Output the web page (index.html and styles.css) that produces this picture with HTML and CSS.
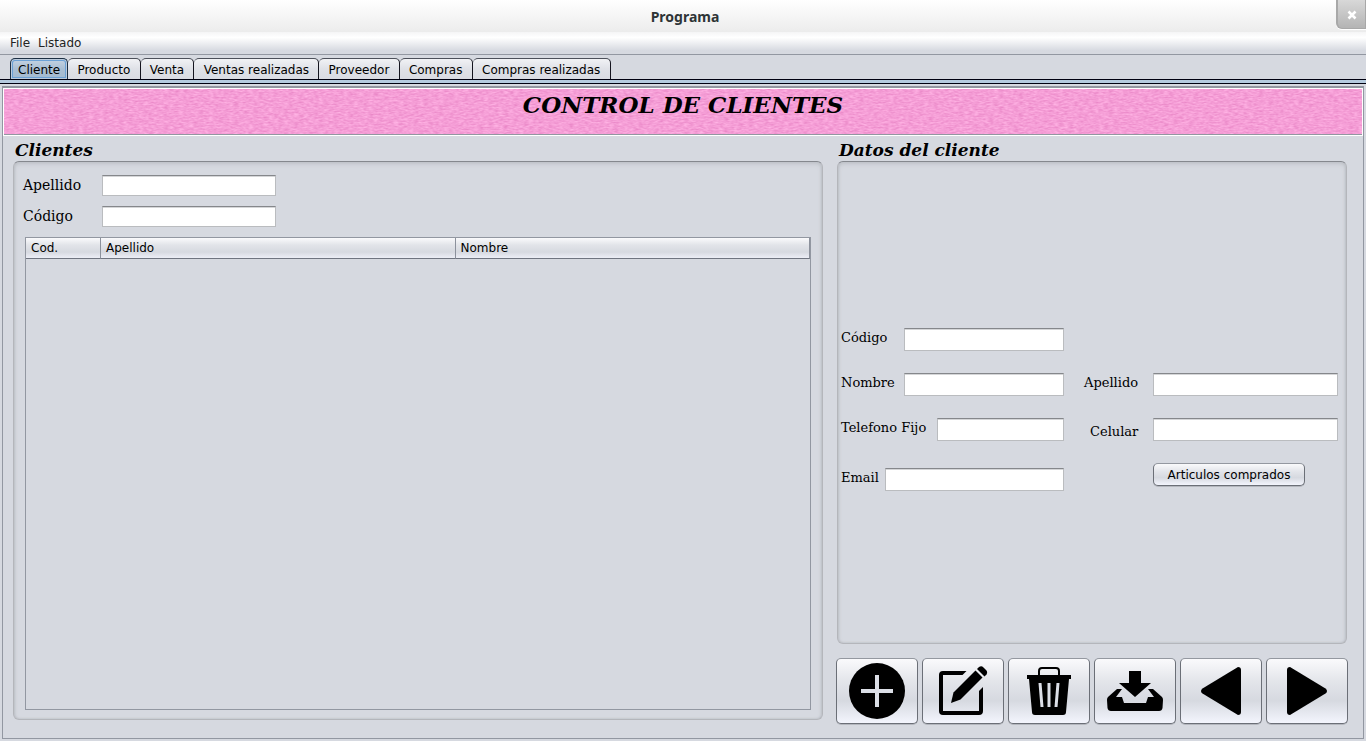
FILE: index.html
```html
<!DOCTYPE html>
<html lang="es">
<head>
<meta charset="utf-8">
<title>Programa</title>
<link rel="stylesheet" href="styles.css">
</head>
<body>
<div class="window">
  <header class="titlebar">
    <span class="titlebar-text">Programa</span>
    <button class="close" type="button" aria-label="Cerrar"><svg width="10" height="10" viewBox="0 0 10 10"><path d="M1.500 1.500l7 7M8.500 1.500l-7 7" stroke="#fff" stroke-width="2.600" fill="none"/></svg></button>
  </header>
  <nav class="menubar">
    <button class="menu" type="button">File</button>
    <button class="menu" type="button">Listado</button>
  </nav>
  <div class="tabs" role="tablist">
    <button class="tab tab-active" type="button" role="tab" aria-selected="true">Cliente</button>
    <button class="tab" type="button" role="tab">Producto</button>
    <button class="tab" type="button" role="tab">Venta</button>
    <button class="tab" type="button" role="tab">Ventas realizadas</button>
    <button class="tab" type="button" role="tab">Proveedor</button>
    <button class="tab" type="button" role="tab">Compras</button>
    <button class="tab" type="button" role="tab">Compras realizadas</button>
  </div>
  <div class="tab-strip"></div>
  <main class="page">
    <div class="banner">
      <svg class="banner-texture" width="100%" height="100%" aria-hidden="true">
        <filter id="weave" x="0" y="0" width="100%" height="100%" color-interpolation-filters="sRGB">
          <feTurbulence type="fractalNoise" baseFrequency="0.2 0.6" numOctaves="2" seed="4"/>
          <feColorMatrix values="0.12 0 0 0 0.9  0.24 0 0 0 0.5  0.16 0 0 0 0.76  0 0 0 0 1"/>
        </filter>
        <rect width="100%" height="100%" filter="url(#weave)"/>
      </svg>
      <h1 class="banner-title">CONTROL DE CLIENTES</h1>
    </div>
    <div class="content">
      <section class="list">
        <h2 class="heading">Clientes</h2>
        <div class="panel list-panel">
          <div class="search">
            <label class="search-label" for="s-apellido">Apellido</label>
            <input class="field" id="s-apellido" type="text">
            <label class="search-label" for="s-codigo">Código</label>
            <input class="field" id="s-codigo" type="text">
          </div>
          <div class="table-box">
            <table class="table">
              <thead><tr><th class="col-code">Cod.</th><th>Apellido</th><th>Nombre</th></tr></thead>
              <tbody></tbody>
            </table>
          </div>
        </div>
      </section>
      <section class="details">
        <h2 class="heading">Datos del cliente</h2>
        <form class="panel form">
          <div class="row row-left"><label class="label" for="codigo">Código</label><input class="field" id="codigo" type="text"></div>
          <div class="row row-left"><label class="label" for="nombre">Nombre</label><input class="field" id="nombre" type="text"></div>
          <div class="row"><label class="label label-right" for="apellido">Apellido</label><input class="field" id="apellido" type="text"></div>
          <div class="row row-left"><label class="label label-long" for="fijo">Telefono Fijo</label><input class="field" id="fijo" type="text"></div>
          <div class="row"><label class="label label-right label-low" for="celular">Celular</label><input class="field" id="celular" type="text"></div>
          <div class="row row-left row-email"><label class="label label-short" for="email">Email</label><input class="field" id="email" type="text"></div>
          <div class="row row-action"><button class="button" type="button">Articulos comprados</button></div>
        </form>
        <div class="actions">
          <button class="action" type="button" aria-label="Nuevo"><svg width="58" height="58" viewBox="0 0 58 58"><circle cx="29" cy="29" r="28"/><path d="M29 13v32M13 29h32" stroke="#dcdfe7" stroke-width="4"/></svg></button>
          <button class="action" type="button" aria-label="Editar"><svg width="58" height="58" viewBox="0 0 58 58"><path d="M32.500 9H9a4 4 0 0 0-4 4v36a4 4 0 0 0 4 4h36a4 4 0 0 0 4-4V25l-4 4v20H9V13h19.500z"/><path d="M17 41l2.500-10.500 22-22 7 7-22 22z"/><path d="M43 7l2-2q2.500-1.500 4.500.5l2.500 2.500q2 2 .5 4.500l-2 2z"/></svg></button>
          <button class="action" type="button" aria-label="Borrar"><svg width="58" height="58" viewBox="0 0 58 58"><path d="M19 14V9a3 3 0 0 1 3-3h14a3 3 0 0 1 3 3v5" fill="none" stroke="#000" stroke-width="2"/><path d="M7 13h44v4h-2l-3 33a3 3 0 0 1-3 3H15a3 3 0 0 1-3-3L9 17H7z"/><path d="M18.500 21h3l2 24h-3zM27.500 21h3v24h-3zM36.500 21h3l-2 24h-3z" fill="#dcdfe7"/></svg></button>
          <button class="action" type="button" aria-label="Guardar"><svg width="58" height="58" viewBox="0 0 58 58"><path d="M23 9h12v12h10L29 35 13 21h10z"/><path d="M11 27h5l-6 8h6l2 6h22l2-6h6l-6-8h5l9 8q1 1 1 3l-.5 8q-.5 3-3.500 3h-48q-3 0-3.500-3L1 38q0-2 1-3z"/></svg></button>
          <button class="action" type="button" aria-label="Anterior"><svg width="58" height="58" viewBox="0 0 58 58"><path d="M46 5q3 0 3 3v42q0 3-3 3L10.500 31.500Q9 30.500 9 29t1.500-2.500z"/></svg></button>
          <button class="action" type="button" aria-label="Siguiente"><svg width="58" height="58" viewBox="0 0 58 58"><path d="M12 5q-3 0-3 3v42q0 3 3 3l35.500-21.500Q49 30.500 49 29t-1.500-2.500z"/></svg></button>
        </div>
      </section>
    </div>
  </main>
</div>
</body>
</html>
```
FILE: styles.css
```css
* { box-sizing: border-box; }
body {
  margin: 0;
  background: #d6d9e0;
  color: #000;
  font-family: "DejaVu Sans", sans-serif;
  font-size: 12px;
}
button, input { font: inherit; color: inherit; margin: 0; }
h1, h2 { margin: 0; }

.window { min-height: 100vh; display: flex; flex-direction: column; }

.titlebar {
  position: relative;
  height: 32px;
  display: flex;
  align-items: center;
  justify-content: center;
  background: linear-gradient(#fff, #ececec);
}
.titlebar-text {
  font-family: "Noto Sans", "Open Sans", sans-serif;
  font-size: 14px;
  font-weight: 700;
  line-height: 18px;
  padding: 2px 0 0 4px;
  color: #2e3436;
}
.close {
  position: absolute;
  top: 0;
  right: 0;
  width: 30px;
  height: 29px;
  padding: 2px 0 0;
  display: flex;
  align-items: center;
  justify-content: center;
  border: 1px solid #a8a8a8;
  border-width: 0 1px 1px 2px;
  border-radius: 0 0 0 6px;
  background: linear-gradient(#d8d8d8, #b4b4b4);
  box-shadow: 0 1px #fff;
}

.menubar {
  height: 23px;
  display: flex;
  gap: 8px;
  padding: 0 10px;
  border-bottom: 1px solid #9297a1;
  background: linear-gradient(#f5f5f6, #fff 25%, #d6d9e0 85%);
}
.menu { border: 0; padding: 0; background: none; color: #232323; line-height: 22px; }

.tabs { display: flex; width: 44.7%; padding: 3px 0 0 10px; }
.tab {
  flex: 1 1 auto;
  height: 21px;
  padding: 1px 6px 0;
  white-space: nowrap;
  line-height: 20px;
  border: 1px solid #14141e;
  border-top-color: #4c505a;
  border-bottom: 0;
  border-left-width: 0;
  border-radius: 5px 5px 0 0;
  background: linear-gradient(#f1f2f5, #dfe1e7 50%, #d9dbe2);
}
.tab-active {
  flex-grow: 0;
  padding: 1px 7px 0;
  border-left-width: 1px;
  border-color: #1c2f43;
  background: linear-gradient(#c6d4e3, #a9bed3 50%, #a4bbd1);
  box-shadow: inset 0 0 0 1px #bccbdc, inset 0 0 0 2px #6ca1d5;
}
.tab-strip {
  height: 5px;
  border: 1px solid #000010;
  border-width: 1px 0;
  background: #b5cbdf;
}

.page {
  flex: 1;
  display: flex;
  flex-direction: column;
  margin: 2px;
  border: 1px solid #9297a1;
  border-top-width: 2px;
}
.banner {
  display: grid;
  height: 48px;
  padding-bottom: 1px;
  border: 1px solid #fff;
  background: #9297a1;
}
.banner-texture, .banner-title { grid-area: 1 / 1; }
.banner-texture { display: block; height: 45px; background: #f6a0d8; }
.banner-title {
  z-index: 1;
  text-align: center;
  font: italic 700 23px/32px "DejaVu Serif", serif;
}

.content {
  flex: 1;
  display: grid;
  grid-template-columns: 810fr 510fr;
  gap: 14px;
  padding: 3px 16px 14px 10px;
}
.list, .details { display: flex; flex-direction: column; min-width: 0; }
.list { padding-bottom: 4px; }
.heading {
  padding-left: 2px;
  font: italic 700 17px/22px "DejaVu Serif", serif;
}
.panel {
  flex: 1;
  border: 1px solid #b4b6bb;
  border-top-color: #85888e;
  border-radius: 6px;
  box-shadow: inset 0 2px 4px #bfc2c9, inset 1px 0 2px #bfc2c9, inset -1px 0 2px #bfc2c9;
}

.list-panel { display: flex; flex-direction: column; gap: 10px; padding: 13px 11px 9px; }
.search { display: grid; grid-template-columns: 77px 174px; row-gap: 10px; }
.search-label { font: 14px/20px "DejaVu Serif", serif; margin-left: -2px; }
.field {
  min-width: 0;
  width: 100%;
  height: 21px;
  padding: 2px 6px;
  border: 1px solid #babcbf;
  border-top-color: #85878b;
  border-radius: 0;
  background: #fff;
  box-shadow: inset 0 1px #d5d6d8;
}
.table-box { flex: 1; border: 1px solid #9297a1; }
.table { width: 100%; border-collapse: separate; border-spacing: 0; table-layout: fixed; }
.table th {
  height: 21px;
  padding: 0 5px 1px;
  text-align: left;
  font-weight: 400;
  line-height: 18px;
  border-right: 1px solid #8c919c;
  border-bottom: 1px solid #6f7480;
  background: linear-gradient(#fafafc, #e2e4e9 35%, #d6d9e0 70%, #eceef6);
}
.table .col-code { width: 75px; }

.form {
  display: grid;
  grid-template-columns: 223fr 254fr;
  grid-auto-rows: max-content;
  gap: 22px 20px;
  padding: 166px 8px 0 3px;
}
.row { display: flex; min-width: 0; }
.row-left { grid-column: 1; }
.row .field { flex: 1; height: 23px; }
.label { flex: 0 0 63px; font: 13px/20px "DejaVu Serif", serif; }
.label-long { flex-basis: 96px; }
.label-short { flex-basis: 44px; }
.label-right { flex-basis: 69px; }
.label-low { padding: 5px 0 0 6px; line-height: 18px; }
.row-email { padding-top: 5px; }
.row-action { padding-left: 69px; align-items: flex-start; }
.button, .action {
  border: 1px solid #6b6f77;
  border-top-color: #9498a0;
  border-radius: 5px;
  background: linear-gradient(#fafafc, #e3e5ea 35%, #d6d9e0 65%, #f3f5fd);
  box-shadow: 0 1px #b4b7be;
}
.button { width: 152px; height: 23px; padding: 0; white-space: nowrap; }

.actions { display: flex; gap: 4px; margin: 14px -1px 0; }
.action {
  flex: 1;
  height: 66px;
  padding: 0;
  display: flex;
  align-items: center;
  justify-content: center;
}
```
